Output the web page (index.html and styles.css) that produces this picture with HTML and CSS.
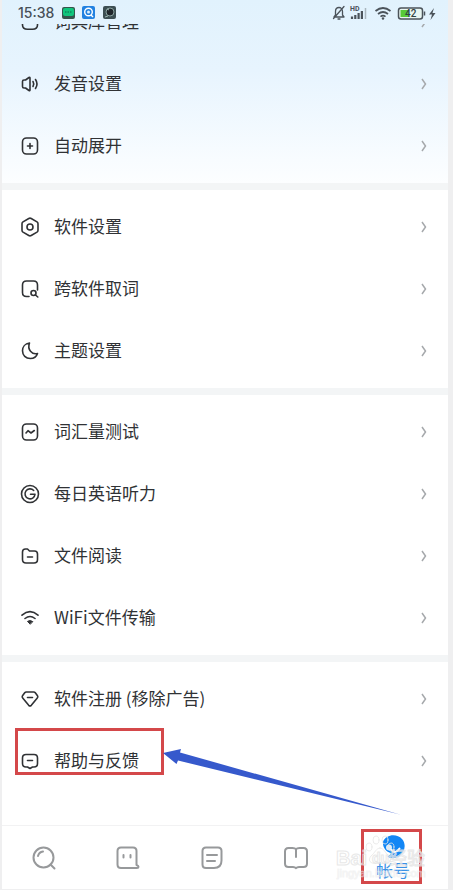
FILE: index.html
```html
<!DOCTYPE html>
<html lang="zh-CN">
<head>
<meta charset="utf-8">
<meta name="viewport" content="width=device-width, initial-scale=1">
<title>帐号</title>
<link rel="stylesheet" href="styles.css">
</head>
<body>
<svg class="defs" aria-hidden="true">
  <symbol id="chevron" viewBox="0 0 8 14"><path d="M2 2 5.5 7 2 12"/></symbol>
</svg>
<div class="phone">
  <header class="status">
    <time class="clock">15:38</time>
    <svg class="notices" viewBox="0 0 56 14" aria-hidden="true">
      <rect x="1" y="1" width="13" height="12" rx="2" fill="#35544c"/><rect x="2" y="2" width="11" height="8" rx="2" fill="#10c57c"/><path d="M4 6h7" stroke="#0a6b4a" stroke-width="1.2" stroke-dasharray="1.5 1"/>
      <rect x="21" y="0" width="13" height="13" rx="2" fill="#2181e0"/><circle cx="27.500" cy="6" r="3.800" fill="none" stroke="#fff" stroke-width="1.400"/><circle cx="27.500" cy="6" r="1.500" fill="#d9efff"/><path d="m30 9 2 2" stroke="#fff" stroke-width="1.400"/>
      <rect x="42" y="0" width="13" height="13" rx="2" fill="#3d4f53"/><circle cx="49" cy="6" r="4" fill="#20262b" stroke="#89a19e"/><path d="m46 3 2 1M44 11l3-1" stroke="#9ab5af"/>
    </svg>
    <svg class="signals" viewBox="0 0 106 18" aria-hidden="true">
      <g fill="none" stroke="#4b535a" stroke-width="1.300" stroke-linecap="round" stroke-linejoin="round">
        <path d="M2 13h10l-1.500-2V7.500C10.500 5 9 3.500 7 3.500S3.500 5 3.500 7.500V11L2 13M6 15h2M1.500 14.500 12 2.500"/>
      </g>
      <text x="18" y="7" class="hd">HD</text>
      <path d="M20 15v-2.500M23.300 15v-4M26.600 15V9M29.900 15V7" stroke="#4b535a" stroke-width="2.200"/><path d="M33.500 15V4" stroke="#a9b6be" stroke-width="1.500"/>
      <path d="M43.500 7q7.500-6 15 0M46 10q5-4 10 0M48.500 12.600q2.500-2 5 0" fill="none" stroke="#4b535a" stroke-width="1.700"/><circle cx="51" cy="14.500" r="1.200" fill="#4b535a"/>
      <rect x="66.500" y="4" width="24" height="11" rx="2.500" fill="#e9f6f2" stroke="#4b535a" stroke-width="1.500"/><rect x="68.500" y="6" width="8.500" height="7" fill="#58ca38"/><path d="M92.500 7.500v4" stroke="#4b535a" stroke-width="1.500"/>
      <text x="73" y="13" class="charge">42</text>
      <path d="m102 4-5 6.500h3L98.500 16l5-7h-3z" fill="#4b535a"/>
    </svg>
  </header>

  <main class="settings">
    <section class="group">
      <div class="clip"><a class="row" href="#dict">
        <svg class="icon" viewBox="0 0 20 20"><path d="M2.500 5v8c0 3 2 4.200 5 4.200h5c3 0 5-1.200 5-4.200V5z"/></svg>
        <span class="label">词典库管理</span>
        <svg class="chevron"><use href="#chevron"/></svg></a></div>
      <a class="row" href="#sound">
        <svg class="icon" viewBox="0 0 20 20"><path d="M2.500 7.500v5Q2.500 14 4 14h1.500l3.500 2.500q1 .5 1-.8V4.300q0-1.300-1-.8L5.500 6H4Q2.500 6 2.500 7.500zM13 7.500q1.500 2.500 0 5M15.500 5.500q3 4.500 0 9"/></svg>
        <span class="label">发音设置</span>
        <svg class="chevron"><use href="#chevron"/></svg></a>
      <a class="row" href="#expand">
        <svg class="icon" viewBox="0 0 20 20"><rect x="2.500" y="2" width="15" height="16" rx="4"/><path d="M10 7.500v5M7.500 10h5"/></svg>
        <span class="label">自动展开</span>
        <svg class="chevron"><use href="#chevron"/></svg></a>
    </section>

    <section class="group">
      <a class="row" href="#software">
        <svg class="icon" viewBox="0 0 20 20"><path d="M8.800 1.500q1.200-.7 2.400 0l5.800 3.400q1 .7 1 1.900v6.400q0 1.200-1 1.900l-5.800 3.400q-1.200.7-2.400 0L3 15.100q-1-.7-1-1.900V6.800q0-1.200 1-1.900z"/><circle cx="10" cy="10" r="3"/></svg>
        <span class="label">软件设置</span>
        <svg class="chevron"><use href="#chevron"/></svg></a>
      <a class="row" href="#lookup">
        <svg class="icon" viewBox="0 0 20 20"><path d="M9 17.500H6.500q-4 0-4-4V6q0-4 4-4h7q4 0 4 4v5"/><circle cx="13.500" cy="14" r="2.500"/><path d="m15.500 16 2.300 2"/></svg>
        <span class="label">跨软件取词</span>
        <svg class="chevron"><use href="#chevron"/></svg></a>
      <a class="row" href="#theme">
        <svg class="icon" viewBox="0 0 20 20"><path d="M9.500 2C5 2.500 2.500 6 2.500 9.800c0 4.500 3.300 7.700 7.800 7.700 3.400 0 6.200-1.800 7.200-5-5.500 1.500-10.500-4-8-10.500z"/></svg>
        <span class="label">主题设置</span>
        <svg class="chevron"><use href="#chevron"/></svg></a>
    </section>

    <section class="group">
      <a class="row" href="#vocabulary">
        <svg class="icon" viewBox="0 0 20 20"><rect x="2.500" y="2" width="15" height="16" rx="4"/><path d="m6 11 2-2.300 3 2.300 3.300-2.500"/></svg>
        <span class="label">词汇量测试</span>
        <svg class="chevron"><use href="#chevron"/></svg></a>
      <a class="row" href="#listening">
        <svg class="icon" viewBox="0 0 20 20"><circle cx="10" cy="10" r="8.500"/><path d="M13.700 6.500a5 5 0 1 0 1.300 3.800h-4.500"/></svg>
        <span class="label">每日英语听力</span>
        <svg class="chevron"><use href="#chevron"/></svg></a>
      <a class="row" href="#files">
        <svg class="icon" viewBox="0 0 20 20"><path d="M2.500 6q0-3 3-3h2l2 2h5q3 0 3 3v5.500q0 3.500-3.500 3.500H6q-3.500 0-3.500-3.500zM7.500 11h5"/></svg>
        <span class="label">文件阅读</span>
        <svg class="chevron"><use href="#chevron"/></svg></a>
      <a class="row" href="#transfer">
        <svg class="icon" viewBox="0 0 20 20"><path d="M2 7.200q8-7 16 0M5 10.500q5-4 10 0"/><path d="M10 16 7.500 13.400q2.500-1.800 5 0z" class="solid"/></svg>
        <span class="label">WiFi文件传输</span>
        <svg class="chevron"><use href="#chevron"/></svg></a>
    </section>

    <section class="group">
      <a class="row" href="#register">
        <svg class="icon" viewBox="0 0 20 20"><path d="M6.300 3h7.400q1 0 1.600.8l2.200 3q.8 1.200-.2 2.200l-6 7.300q-1.300 1.200-2.600 0L2.700 9q-1-1-.2-2.200l2.200-3q.6-.8 1.600-.8zM7.500 8.500h5"/></svg>
        <span class="label">软件注册 (移除广告)</span>
        <svg class="chevron"><use href="#chevron"/></svg></a>
      <a class="row" href="#help">
        <svg class="icon" viewBox="0 0 20 20"><path d="M6 3.500h8q3.500 0 3.500 3.500v5.500q0 3.500-3.500 3.500h-1.500L10 17.500 7.500 16H6q-3.500 0-3.500-3.500V7q0-3.500 3.500-3.500zM7.500 9.500h5"/></svg>
        <span class="label">帮助与反馈</span>
        <svg class="chevron"><use href="#chevron"/></svg>
        <span class="mark mark-help"></span>
        <svg class="arrow" viewBox="0 0 238 68" aria-hidden="true"><path d="m0 5 18-4-1 3.500L237 66.500 15 12.500 13.500 16z"/></svg></a>
    </section>
  </main>

  <nav class="tabs">
    <button class="tab" aria-label="查词"><svg viewBox="0 0 24 24"><circle cx="11.500" cy="11.500" r="10"/><path d="M6 10q1-4 5-4.500M18.500 18.500l4 4"/></svg></button>
    <button class="tab" aria-label="翻译"><svg viewBox="0 0 24 24"><path d="M20.500 19V5q0-3.500-3.500-3.500H5Q1.500 1.500 1.500 5v13.500q0 3.500 3.500 3.500h16q1.500 0 1.500-1.300 0-1-2-1.700zM7.500 9v2.500M14.500 9v2.500"/></svg></button>
    <button class="tab" aria-label="文章"><svg viewBox="0 0 24 24"><path d="M6 1.500h12q3.500 0 3.500 3.500v9.500q0 7.500-7.500 7.500H6q-3.500 0-3.500-3.500V5Q2.500 1.500 6 1.500zM7 9h10M7 15h8"/></svg></button>
    <button class="tab" aria-label="学习"><svg viewBox="0 0 24 24"><path d="M4.500 2h4q2.500 0 3.500 1.200Q13 2 15.500 2h4q3.500 0 3.500 3.500v12q0 3.500-3.500 3.500h-4.500q-2 0-3 1.200Q11 21 9 21H4.500Q1 21 1 17.500v-12Q1 2 4.500 2zM12 3.500V11"/></svg></button>
    <button class="tab account">
      <svg viewBox="0 0 24 24"><path d="M2 7C5-1 16-1.500 21 4c4.500 5 3 13-2.500 17-4 3-9.500 2.500-12 .5 2-1 3-2 3.500-3.500C5 17 1.500 12 2 7z" class="disc"/><circle cx="8" cy="12.500" r="3" class="cut"/><path d="M10.500 15q4 4.500 8-1.500" class="smile"/></svg>
      <span>帐号</span>
      <i class="mark mark-account"></i>
      <svg class="watermark" viewBox="0 0 106 52" aria-hidden="true">
        <g class="paw"><ellipse cx="34" cy="16" rx="3" ry="4"/><ellipse cx="41" cy="9" rx="3" ry="4"/><ellipse cx="50" cy="9" rx="3" ry="4"/><ellipse cx="56" cy="16" rx="3" ry="4"/><path d="M45 17c-4 0-5 5-9 8-4 5 0 9 9 7 9 2 13-2 9-7-4-3-5-8-9-8z"/></g>
        <text x="1" y="34" class="brand">Bai</text><text x="37" y="32" class="du">du</text><text x="54" y="34" class="brand cjk">经验</text>
        <text x="2" y="46" class="site">jingyan.baidu.com</text>
      </svg>
    </button>
  </nav>
</div>
</body>
</html>
```
FILE: styles.css
```css
* { box-sizing: border-box; }

body {
  margin: 0;
  padding: 0 5px 1px 2px;
  min-height: 100vh;
  display: flex;
  background: #efeff0;
  color: #303235;
  font-family: "Noto Sans CJK SC", "Noto Sans", sans-serif;
}

.defs { position: absolute; width: 0; height: 0; }

.phone {
  flex: 1;
  min-width: 0;
  display: flex;
  flex-direction: column;
  overflow: hidden;
  background: linear-gradient(#e1f2fd 0, #e7f4fe 70px, #f8fcff 160px, #fff 200px);
}

.status {
  height: 24px;
  padding: 2px 10px 0 16px;
  display: flex;
  align-items: center;
}
.clock {
  width: 43px;
  font: 500 14px/20px Inter, sans-serif;
  color: #474f57;
}
.notices { width: 56px; height: 14px; }
.signals { width: 106px; height: 18px; margin-left: auto; }
.hd { font: 700 7px Roboto, sans-serif; fill: #4b535a; }
.charge { font: 500 10px Roboto, sans-serif; fill: #34433f; }

.settings { flex: 1; }
.group { padding: 6px 0; }
.group + .group { border-top: 7px solid #f3f5f6; background: #fff; }
.group:first-child { padding-top: 0; }

/* First row is scrolled partly under the status bar. */
.clip {
  height: 29px;
  display: flex;
  align-items: flex-end;
  overflow: hidden;
}

.row {
  position: relative;
  width: 100%;
  height: 62px;
  padding: 0 20px 0 18px;
  display: flex;
  flex-shrink: 0;
  align-items: center;
  gap: 14px;
  color: inherit;
  text-decoration: none;
}
.label {
  flex: 1;
  padding-bottom: 2px;
  font-size: 17px;
  line-height: 24px;
}
.icon {
  width: 20px;
  height: 20px;
  fill: none;
  stroke: #303235;
  stroke-width: 1.6;
  stroke-linecap: round;
  stroke-linejoin: round;
}
.icon .solid { fill: #303235; stroke-width: 1; }
.chevron {
  width: 8px;
  height: 14px;
  fill: none;
  stroke: #a6a9ac;
  stroke-width: 1.5;
}

.mark { position: absolute; border: 3px solid #d4484a; }
.mark-help { top: -2px; left: 13px; width: 149px; height: 47px; }
.mark-account { top: 3px; left: 50%; width: 61px; height: 55px; margin-left: -32px; }
.arrow {
  position: absolute;
  top: 18px;
  left: 161px;
  width: 238px;
  height: 68px;
  fill: #3659cc;
}

.tabs {
  height: 64px;
  display: grid;
  grid-template-columns: repeat(4, 84fr) 110fr;
  border-top: 1px solid #f2f2f3;
  background: #fff;
}
.tab {
  position: relative;
  padding: 0;
  display: flex;
  flex-direction: column;
  align-items: center;
  justify-content: center;
  border: 0;
  background: none;
  font: inherit;
}
.tab > svg {
  width: 24px;
  height: 24px;
  fill: none;
  stroke: #97999b;
  stroke-width: 2;
  stroke-linecap: round;
  stroke-linejoin: round;
}
.account { color: #3a91e6; font-size: 17px; line-height: 22px; }
.account .disc { fill: #1286f5; stroke: none; }
.account .cut { fill: #dcecfb; stroke: none; }
.account .smile { stroke: #fff; }

.account > .watermark {
  position: absolute;
  top: 5px;
  right: 7px;
  width: 106px;
  height: 52px;
  stroke-width: 1;
}
.paw { fill: none; stroke: #e6e6e6; stroke-opacity: .8; }
.brand, .du {
  font: 700 20px "Liberation Sans", sans-serif;
  fill: #fff;
  fill-opacity: .4;
  stroke: #e2e2e2;
  stroke-opacity: .8;
}
.brand.cjk { font: 400 18px "Noto Sans CJK SC", sans-serif; }
.du { font-size: 14px; }
.site {
  font: 11px "Liberation Sans", sans-serif;
  fill: #fff;
  fill-opacity: .4;
  stroke: #e4e4e4;
  stroke-opacity: .4;
}
```
